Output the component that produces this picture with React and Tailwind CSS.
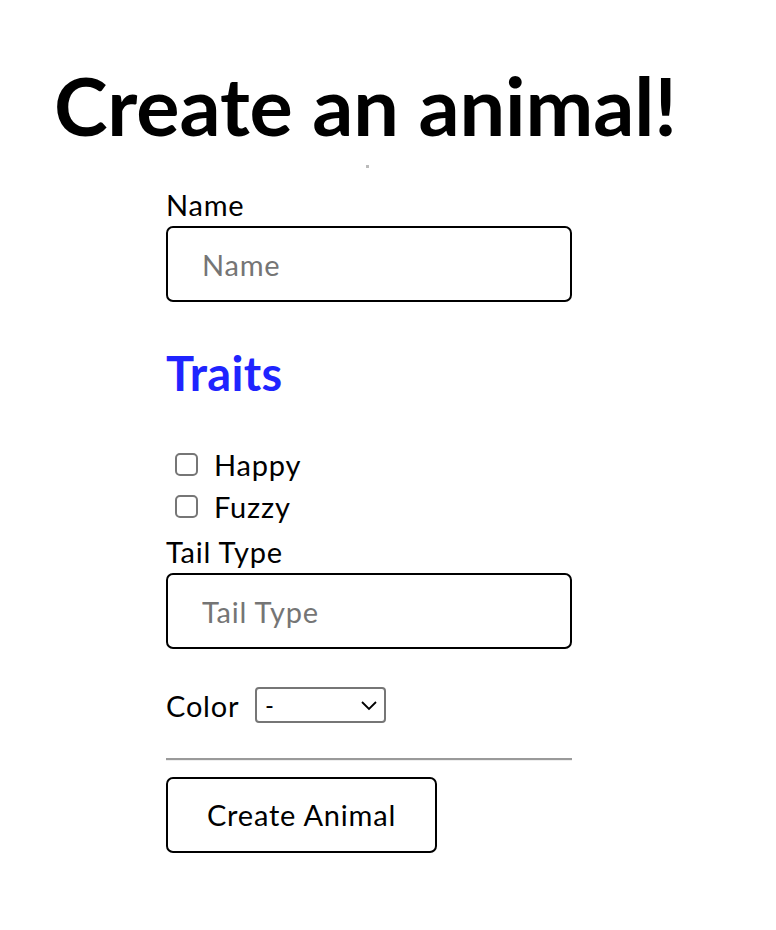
import React, { useState } from 'react';

export default function App() {
  const [name, setName] = useState('');
  const [tail, setTail] = useState('');
  const [happy, setHappy] = useState(false);
  const [fuzzy, setFuzzy] = useState(false);
  const [color, setColor] = useState('-');

  const font = { fontFamily: 'Lato, "Open Sans", sans-serif' };

  return (
    <div className="min-h-[930px] bg-white text-black" style={font}>
      <h1 className="pl-[54px] pt-[64px] text-[81px] font-bold leading-none tracking-[-0.1px]">
        Create an animal!
      </h1>

      {/* tiny stray mark */}
      <div className="ml-[366px] mt-[20px] h-[3px] w-[3px] bg-[#bbbbbb]" />

      <form className="ml-[166px] mt-[18px] w-[406px] text-[29px] tracking-[0.8px]" onSubmit={(e) => e.preventDefault()}>
        <label className="block leading-[38px]">Name</label>
        <input
          value={name}
          onChange={(e) => setName(e.target.value)}
          placeholder="Name"
          className="mt-[2px] block h-[76px] w-full rounded-[7px] border-2 border-black px-[34px] placeholder:text-[#757575] outline-none"
        />

        <h2 className="mt-[48px] text-[47px] font-bold leading-none tracking-[0.3px] text-[#1f24ff]">Traits</h2>

        <div className="mt-[56px] flex flex-col gap-[19px]">
          <label className="flex items-center gap-[16px] pl-[9px] leading-[23px]">
            <input
              type="checkbox"
              checked={happy}
              onChange={(e) => setHappy(e.target.checked)}
              className="h-[23px] w-[23px] appearance-none rounded-[5px] border-2 border-[#767676] checked:bg-[#1f24ff]"
            />
            Happy
          </label>
          <label className="flex items-center gap-[16px] pl-[9px] leading-[23px]">
            <input
              type="checkbox"
              checked={fuzzy}
              onChange={(e) => setFuzzy(e.target.checked)}
              className="h-[23px] w-[23px] appearance-none rounded-[5px] border-2 border-[#767676] checked:bg-[#1f24ff]"
            />
            Fuzzy
          </label>
        </div>

        <label className="mt-[15px] block leading-[38px]">Tail Type</label>
        <input
          value={tail}
          onChange={(e) => setTail(e.target.value)}
          placeholder="Tail Type"
          className="mt-[2px] block h-[76px] w-full rounded-[7px] border-2 border-black px-[34px] placeholder:text-[#757575] outline-none"
        />

        <div className="mt-[38px] flex items-center gap-[16px]">
          <span className="leading-none">Color</span>
          <div className="relative">
            <select
              value={color}
              onChange={(e) => setColor(e.target.value)}
              className="block h-[36px] w-[131px] appearance-none rounded-[4px] border-2 border-[#767676] bg-white pl-[8px] text-[24px] leading-none tracking-normal outline-none"
              style={{ fontFamily: '"Liberation Sans", Arial, sans-serif' }}
            >
              <option>-</option>
              <option>Red</option>
              <option>Brown</option>
              <option>Black</option>
            </select>
            <svg
              className="pointer-events-none absolute right-[8px] top-[12px]"
              width="18"
              height="12"
              viewBox="0 0 18 12"
              fill="none"
              stroke="black"
              strokeWidth="1.8"
            >
              <path d="M2 3l7 7 7-7" />
            </svg>
          </div>
        </div>

        <hr className="mt-[35px] border-0 border-t-2 border-b border-t-[#9a9a9a] border-b-[#eeeeee]" />

        <button
          type="submit"
          className="mt-[16px] h-[76px] w-[271px] rounded-[7px] border-2 border-black bg-white"
        >
          Create Animal
        </button>
      </form>
    </div>
  );
}
